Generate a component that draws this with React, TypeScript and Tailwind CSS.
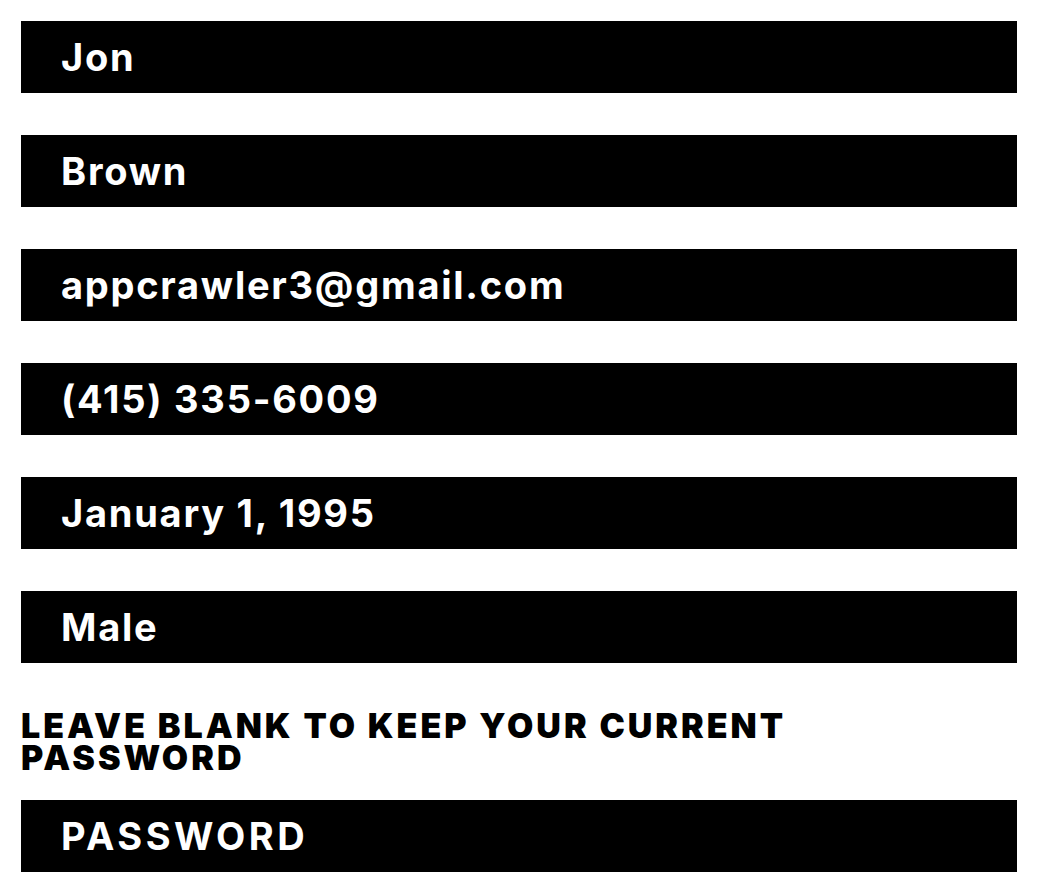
const fields = [
  "Jon",
  "Brown",
  "appcrawler3@gmail.com",
  "(415) 335-6009",
  "January 1, 1995",
  "Male",
];

function Field({ value, wide }: { value: string; wide?: boolean }) {
  return (
    <div
      className={
        wide
          ? "flex h-[72px] items-center bg-black pl-[40px] text-[38px] font-bold leading-none tracking-[3.5px] text-white"
          : "flex h-[72px] items-center bg-black pl-[40px] text-[38px] font-bold leading-none tracking-[1.75px] text-white"
      }
    >
      {value}
    </div>
  );
}

export default function App() {
  return (
    <div className="min-h-screen bg-white px-[21px] pt-[21px] font-['Inter',sans-serif]">
      <div className="flex flex-col gap-[42px]">
        {fields.map((f) => (
          <Field key={f} value={f} />
        ))}
      </div>
      <p className="mt-[47px] text-[34px] font-black uppercase leading-[32px] tracking-[3px] text-black">
        Leave blank to keep your current password
      </p>
      <div className="mt-[26px]">
        <Field value="PASSWORD" wide />
      </div>
    </div>
  );
}
